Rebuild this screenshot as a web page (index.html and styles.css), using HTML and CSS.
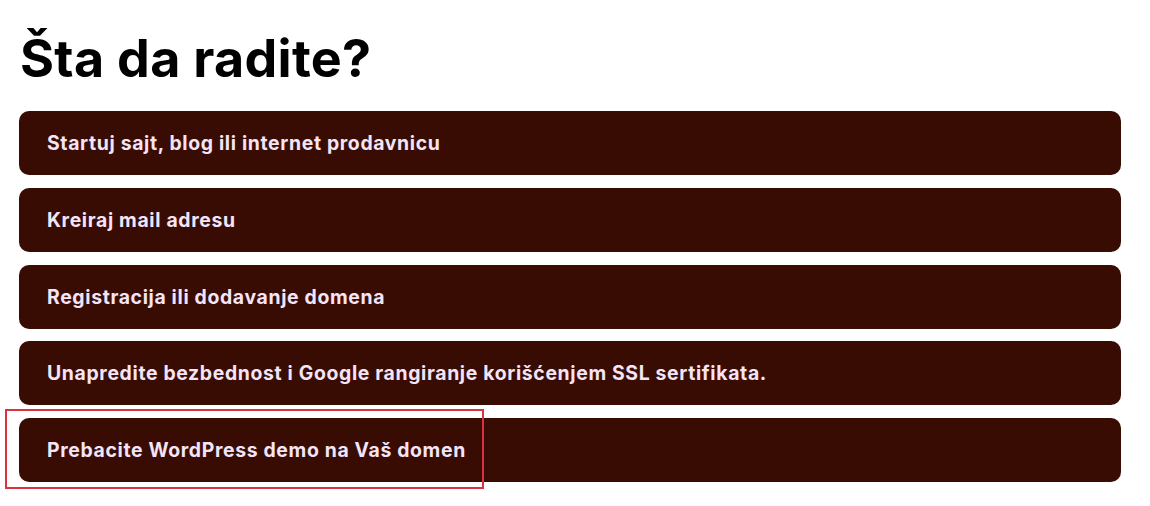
FILE: index.html
```html
<!DOCTYPE html>
<html lang="sr">
<head>
  <meta charset="UTF-8" />
  <meta name="viewport" content="width=device-width, initial-scale=1.0" />
  <title>Šta da radite?</title>
  <link rel="stylesheet" href="styles.css">
</head>
<body>
  <div class="page">
    <h1>Šta da radite?</h1>

    <ul class="tasks">
      <li class="task">Startuj sajt, blog ili internet prodavnicu</li>
      <li class="task">Kreiraj mail adresu</li>
      <li class="task">Registracija ili dodavanje domena</li>
      <li class="task">Unapredite bezbednost i Google rangiranje korišćenjem SSL sertifikata.</li>
      <li class="task marked">
        Prebacite WordPress demo na Vaš domen
        <span class="mark"></span>
      </li>
    </ul>
  </div>
</body>
</html>
```

FILE: styles.css
```css
body {
  margin: 0;
  font-family: Inter, "Open Sans", Arial, sans-serif;
  background: white;
  color: black;
}

.page {
  padding: 22px 29px 24px 19px;
}

h1 {
  margin: 0 0 16px 1px;
  font-size: 52px;
  line-height: 73px;
  font-weight: 700;
  letter-spacing: 0.3px;
}

.tasks {
  list-style: none;
  margin: 0;
  padding: 0;
  display: flex;
  flex-direction: column;
  gap: 12.75px;
}

.task {
  display: flex;
  align-items: center;
  height: 64px;
  padding: 0 28px;
  box-sizing: border-box;
  background: #380c02;
  color: #f3e4f7;
  border-radius: 10px;
  font-size: 19.4px;
  font-weight: 700;
  letter-spacing: 0.65px;
}

.marked {
  position: relative;
}

.mark {
  position: absolute;
  left: -14px;
  top: -9px;
  width: 479px;
  height: 80px;
  box-sizing: border-box;
  border: 2px solid #d9333f;
}
```
